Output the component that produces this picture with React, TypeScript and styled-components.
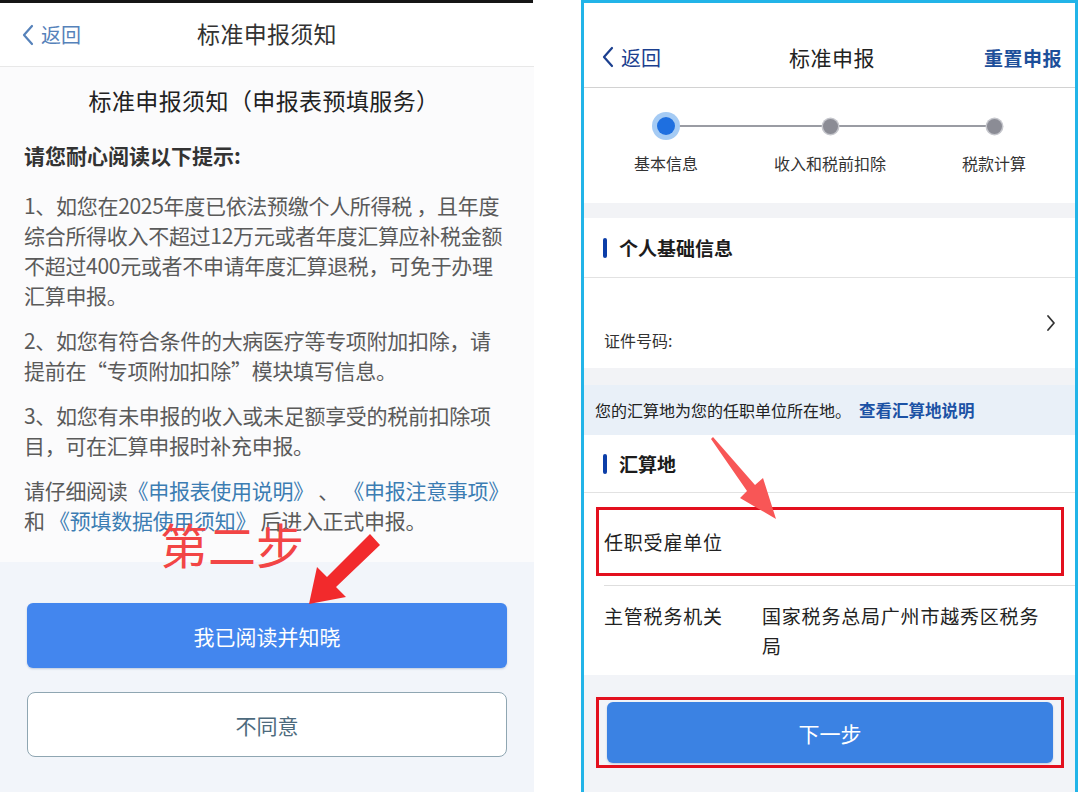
import styled, { createGlobalStyle } from "styled-components";

const GlobalStyle = createGlobalStyle`
  html, body {
    margin: 0;
    padding: 0;
    background: #fff;
  }
  body {
    font-family: "Noto Sans CJK SC", "Noto Sans", sans-serif;
  }
`;

type Step = { label: string; active?: boolean };

const steps: Step[] = [
  { label: "基本信息", active: true },
  { label: "收入和税前扣除" },
  { label: "税款计算" },
];

const BackIcon = ({ color }: { color: string }) => (
  <svg width="12" height="22" viewBox="0 0 12 22">
    <path d="M10 2 L2 11 L10 20" fill="none" stroke={color} strokeWidth="2.2" strokeLinecap="round" strokeLinejoin="round" />
  </svg>
);

/**
 * 左侧: 标准申报须知
 */
const NoticeScreen = () => (
  <LeftPanel>
    <StatusEdge />
    <NoticeHeader>
      <BackLink $color="#5682ba">
        <BackIcon color="#5682ba" />
        返回
      </BackLink>
      <HeaderTitle>标准申报须知</HeaderTitle>
      <span />
    </NoticeHeader>
    <NoticeBody>
      <NoticeTitle>标准申报须知（申报表预填服务）</NoticeTitle>
      <Hint>请您耐心阅读以下提示:</Hint>
      <Para>
        1、如您在2025年度已依法预缴个人所得税 ，且年度<br />
        综合所得收入不超过12万元或者年度汇算应补税金额<br />
        不超过400元或者不申请年度汇算退税，可免于办理<br />
        汇算申报。
      </Para>
      <Para>
        2、如您有符合条件的大病医疗等专项附加扣除，请<br />
        提前在“专项附加扣除”模块填写信息。
      </Para>
      <Para>
        3、如您有未申报的收入或未足额享受的税前扣除项<br />
        目，可在汇算申报时补充申报。
      </Para>
      <Para>
        请仔细阅读<DocLink>《申报表使用说明》</DocLink> 、 <DocLink>《申报注意事项》</DocLink>
        <br />
        和 <DocLink>《预填数据使用须知》</DocLink> 后进入正式申报。
      </Para>
    </NoticeBody>
    <NoticeFooter>
      <PrimaryButton $height={65} $radius={6}>我已阅读并知晓</PrimaryButton>
      <GhostButton>不同意</GhostButton>
    </NoticeFooter>
    <StepMark>第二步</StepMark>
    <Arrow $left={300} $top={528}>
      <svg width="90" height="85" viewBox="0 0 90 85">
        <polygon points="70,6 27,49 17,39 9,76 46,69 36,59 80,17" fill="#f22a2c" />
      </svg>
    </Arrow>
  </LeftPanel>
);

/**
 * 右侧: 标准申报
 */
const FilingScreen = () => (
  <RightPanel>
    <FilingHeader>
      <BackLink $color="#1b3f8f">
        <BackIcon color="#1b3f8f" />
        返回
      </BackLink>
      <FilingTitle>标准申报</FilingTitle>
      <ResetLink>重置申报</ResetLink>
    </FilingHeader>
    <Steps>
      {steps.map((step, i) => (
        <StepItem key={step.label}>
          <StepTrack $first={i === 0} $last={i === steps.length - 1}>
            <StepDot $active={!!step.active} />
          </StepTrack>
          <StepLabel>{step.label}</StepLabel>
        </StepItem>
      ))}
    </Steps>
    <GapBand $height={15} />
    <SectionHead>
      <SectionBar />
      个人基础信息
    </SectionHead>
    <IdRow>
      <IdLabel>证件号码:</IdLabel>
      <svg width="12" height="18" viewBox="0 0 12 18">
        <path d="M3 2 L9 9 L3 16" fill="none" stroke="#333" strokeWidth="1.8" strokeLinecap="round" strokeLinejoin="round" />
      </svg>
    </IdRow>
    <GapBand $height={17} />
    <InfoBar>
      您的汇算地为您的任职单位所在地。<InfoLink>查看汇算地说明</InfoLink>
    </InfoBar>
    <SectionHead $height={57}>
      <SectionBar />
      汇算地
    </SectionHead>
    <EmployerRow>
      <RedFrame $pad="0 0 0 5px">
        <FieldLabel>任职受雇单位</FieldLabel>
      </RedFrame>
    </EmployerRow>
    <TaxRow>
      <TaxLabel>主管税务机关</TaxLabel>
      <TaxValue>国家税务总局广州市越秀区税务局</TaxValue>
    </TaxRow>
    <FilingFooter>
      <RedFrame $pad="2px 8px">
        <PrimaryButton $height={61} $radius={6} $color="#3b82e3">下一步</PrimaryButton>
      </RedFrame>
    </FilingFooter>
    <Arrow $left={116} $top={427}>
      <svg width="80" height="90" viewBox="0 0 80 90">
        <polygon points="11,9 47,61 40,68 76,89 63,48 55,55 13,7" fill="#f85656" />
      </svg>
    </Arrow>
  </RightPanel>
);

export default function App() {
  return (
    <>
      <GlobalStyle />
      <Page>
        <NoticeScreen />
        <FilingScreen />
      </Page>
    </>
  );
}

const Page = styled.div`
  width: 1080px;
  height: 792px;
  overflow: hidden;
  display: flex;
  gap: 47px;
  background: #fff;
`;

/* ---------- 左侧 ---------- */

const LeftPanel = styled.div`
  position: relative;
  width: 534px;
  height: 792px;
  flex-shrink: 0;
  display: flex;
  flex-direction: column;
  background: #fbfbfc;
`;

const StatusEdge = styled.div`
  height: 3px;
  margin-right: 1px;
  background: #151515;
`;

const NoticeHeader = styled.div`
  height: 63px;
  display: grid;
  grid-template-columns: 1fr auto 1fr;
  align-items: center;
  padding: 0 22px;
  background: #fff;
  border-bottom: 1px solid #e8e8e8;
`;

const BackLink = styled.div<{ $color: string }>`
  display: flex;
  align-items: center;
  gap: 7px;
  font-size: 20px;
  color: ${({ $color }) => $color};
`;

const HeaderTitle = styled.div`
  font-size: 23px;
  color: #333;
  letter-spacing: 0.3px;
  margin-top: -3px;
`;

const NoticeBody = styled.div`
  padding: 18px 24px 0;
  color: #5a5a5a;
`;

const NoticeTitle = styled.div`
  font-size: 23px;
  line-height: 30px;
  color: #222;
  letter-spacing: 0.4px;
  text-align: center;
  padding-right: 6px;
  margin-bottom: 25px;
`;

const Hint = styled.div`
  font-size: 21px;
  line-height: 30px;
  font-weight: 700;
  color: #333;
  margin-bottom: 20px;
`;

const Para = styled.p`
  margin: 0 0 15px;
  font-size: 21px;
  line-height: 30px;
  letter-spacing: -0.3px;
  white-space: nowrap;
`;

const DocLink = styled.span`
  color: #3c7db3;
`;

const NoticeFooter = styled.div`
  margin-top: auto;
  height: 230px;
  box-sizing: border-box;
  padding: 41px 27px 0;
  display: flex;
  flex-direction: column;
  gap: 24px;
  background: #f2f5fa;
`;

const PrimaryButton = styled.div<{ $height: number; $radius: number; $color?: string }>`
  height: ${({ $height }) => $height}px;
  border-radius: ${({ $radius }) => $radius}px;
  background: ${({ $color }) => $color ?? "#4386ee"};
  color: #fff;
  font-size: 21px;
  display: flex;
  align-items: center;
  justify-content: center;
  box-shadow: 0 1px 2px rgba(40, 80, 140, 0.25);
`;

const GhostButton = styled.div`
  height: 65px;
  box-sizing: border-box;
  border: 1px solid #8fa6b2;
  border-radius: 8px;
  background: #fff;
  color: #4d6a7d;
  font-size: 21px;
  display: flex;
  align-items: center;
  justify-content: center;
`;

const StepMark = styled.div`
  position: absolute;
  left: 160px;
  top: 519px;
  font-size: 48px;
  line-height: 48px;
  font-weight: 400;
  color: #f24545;
`;

const Arrow = styled.div<{ $left: number; $top: number }>`
  position: absolute;
  left: ${({ $left }) => $left}px;
  top: ${({ $top }) => $top}px;
  line-height: 0;
`;

/* ---------- 右侧 ---------- */

const RightPanel = styled.div`
  position: relative;
  width: 497px;
  height: 792px;
  flex-shrink: 0;
  box-sizing: border-box;
  border: 3px solid #22b4e8;
  border-bottom: none;
  display: flex;
  flex-direction: column;
  background: #fff;
`;

const FilingHeader = styled.div`
  height: 60px;
  padding: 24px 13px 0 18px;
  display: grid;
  grid-template-columns: 1fr auto 1fr;
  align-items: center;
  border-bottom: 1px solid #d2d2d2;
`;

const FilingTitle = styled.div`
  font-size: 21px;
  color: #222;
  letter-spacing: 0.5px;
`;

const ResetLink = styled.div`
  justify-self: end;
  font-size: 19px;
  font-weight: 600;
  color: #1d4f9a;
  letter-spacing: 0.5px;
`;

const Steps = styled.div`
  height: 115px;
  display: grid;
  grid-template-columns: repeat(3, 164px);
  padding-top: 24px;
  box-sizing: border-box;
`;

const StepItem = styled.div`
  display: flex;
  flex-direction: column;
  align-items: center;
`;

const StepTrack = styled.div<{ $first: boolean; $last: boolean }>`
  position: relative;
  width: 100%;
  height: 28px;
  display: flex;
  align-items: center;
  justify-content: center;

  &::before,
  &::after {
    content: "";
    position: absolute;
    top: 13px;
    height: 2px;
    width: 50%;
    background: #9a9ca3;
  }
  &::before {
    left: 0;
    display: ${({ $first }) => ($first ? "none" : "block")};
  }
  &::after {
    right: 0;
    display: ${({ $last }) => ($last ? "none" : "block")};
  }
`;

const StepDot = styled.div<{ $active: boolean }>`
  position: relative;
  z-index: 1;
  width: ${({ $active }) => ($active ? 18 : 15)}px;
  height: ${({ $active }) => ($active ? 18 : 15)}px;
  border-radius: 50%;
  background: ${({ $active }) => ($active ? "#1e6fe0" : "#8b8c95")};
  box-shadow: ${({ $active }) =>
    $active ? "0 0 0 5px #a5cbf4" : "0 0 0 1.5px #c5c6cc"};
`;

const StepLabel = styled.div`
  margin-top: 11px;
  font-size: 16px;
  line-height: 24px;
  color: #333;
`;

const GapBand = styled.div<{ $height: number }>`
  height: ${({ $height }) => $height}px;
  background: #f2f3f6;
`;

const SectionHead = styled.div<{ $height?: number }>`
  height: ${({ $height }) => $height ?? 59}px;
  display: flex;
  align-items: center;
  gap: 12px;
  padding-left: 19px;
  font-size: 19px;
  font-weight: 700;
  color: #1c1c1c;
  border-bottom: 1px solid #e2e2e2;
`;

const SectionBar = styled.span`
  width: 4px;
  height: 20px;
  border-radius: 2px;
  background: #0c3ea8;
`;

const IdRow = styled.div`
  height: 90px;
  display: flex;
  justify-content: space-between;
  padding: 0 18px 0 20px;

  svg {
    align-self: center;
  }
`;

const IdLabel = styled.div`
  align-self: flex-end;
  padding-bottom: 16px;
  font-size: 16px;
  line-height: 24px;
  color: #333;
`;

const InfoBar = styled.div`
  height: 50px;
  display: flex;
  align-items: center;
  padding-left: 11px;
  font-size: 16px;
  color: #222;
  background: #e9f0f8;
`;

const InfoLink = styled.span`
  margin-left: 8px;
  font-weight: 700;
  font-size: 16.5px;
  color: #1c52a5;
`;

const EmployerRow = styled.div`
  height: 92px;
  box-sizing: border-box;
  padding: 14px 11px 9px 12px;
  display: flex;
`;

const RedFrame = styled.div<{ $pad: string }>`
  flex: 1;
  box-sizing: border-box;
  border: 3px solid #e3101e;
  padding: ${({ $pad }) => $pad};
  display: flex;
  flex-direction: column;
  justify-content: center;
`;

const FieldLabel = styled.div`
  font-size: 19px;
  color: #222;
  letter-spacing: 0.8px;
`;

const TaxRow = styled.div`
  margin-left: 20px;
  padding: 15px 0 14px;
  display: flex;
  border-top: 1px solid #dedede;
  font-size: 19px;
  line-height: 30px;
  color: #222;
  letter-spacing: 0.8px;
`;

const TaxLabel = styled.div`
  width: 158px;
  flex-shrink: 0;
`;

const TaxValue = styled.div`
  width: 288px;
`;

const FilingFooter = styled.div`
  flex: 1;
  padding: 22px 11px 0 12px;
  display: flex;
  flex-direction: column;
  align-items: stretch;
  background: #f2f4f8;

  & > div {
    flex: 0 0 auto;
  }
`;
